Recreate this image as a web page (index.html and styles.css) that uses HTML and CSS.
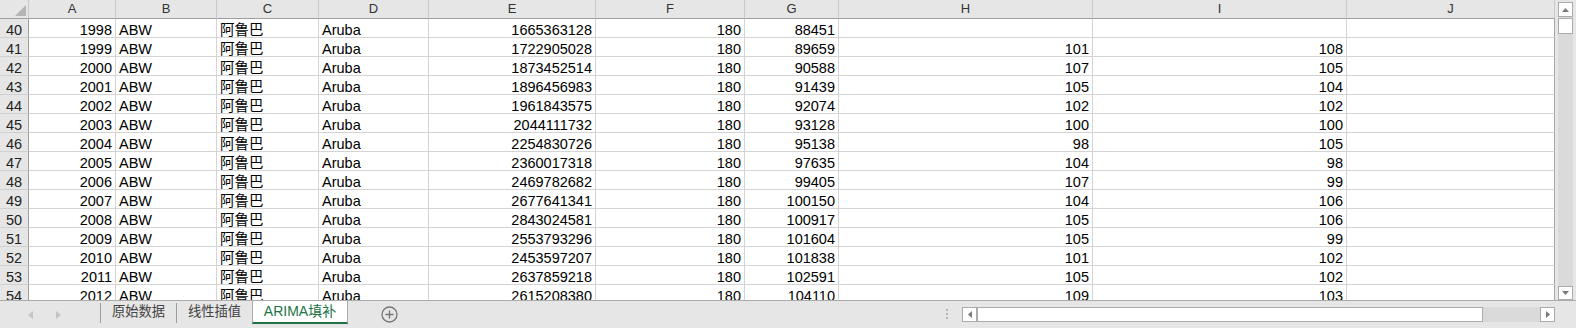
FILE: index.html
```html
<!DOCTYPE html>
<html lang="zh-CN">
<head>
    <meta charset="UTF-8">
    <title>ARIMA填补</title>
    <link rel="stylesheet" href="styles.css">
</head>
<body>
    <div class="window">
        <div class="main">
            <div class="sheet">
                <div class="grid" id="grid"></div>
            </div>
            <div class="vscroll">
                <div class="vbtn up"><svg width="7" height="4"><polygon points="0,4 7,4 3.5,0"/></svg></div>
                <div class="vtrack"><div class="vthumb"></div></div>
                <div class="vbtn down"><svg width="7" height="4"><polygon points="0,0 7,0 3.5,4"/></svg></div>
            </div>
        </div>

        <div class="tabbar">
            <div class="tabs">
                <div class="nav">
                    <svg width="5" height="8"><polygon points="5,0 5,8 0,4"/></svg>
                    <svg width="5" height="8"><polygon points="0,0 0,8 5,4"/></svg>
                </div>
                <span class="sep"></span>
                <div class="tab">原始数据</div>
                <span class="sep"></span>
                <div class="tab">线性插值</div>
                <div class="tab active">ARIMA填补</div>
                <div class="add">
                    <svg width="17" height="17" viewBox="0 0 17 17">
                        <circle cx="8.5" cy="8.5" r="7.5"/>
                        <path d="M8.5 4.5v8M4.5 8.5h8"/>
                    </svg>
                </div>
            </div>
            <div class="hbar">
                <div class="grip"><i></i><i></i><i></i></div>
                <div class="hscroll">
                    <span class="sbtn"><svg width="4" height="7"><polygon points="4,0 4,7 0,3.5"/></svg></span>
                    <span class="hthumb"></span>
                    <span class="htrack"></span>
                    <span class="sbtn"><svg width="4" height="7"><polygon points="0,0 0,7 4,3.5"/></svg></span>
                </div>
            </div>
        </div>
    </div>

    <script>
        const letters = ["A", "B", "C", "D", "E", "F", "G", "H", "I", "J"];

        // row, year, E, G, H, I
        const rows = [
            [40, 1998, 1665363128, 88451, "", ""],
            [41, 1999, 1722905028, 89659, 101, 108],
            [42, 2000, 1873452514, 90588, 107, 105],
            [43, 2001, 1896456983, 91439, 105, 104],
            [44, 2002, 1961843575, 92074, 102, 102],
            [45, 2003, 2044111732, 93128, 100, 100],
            [46, 2004, 2254830726, 95138, 98, 105],
            [47, 2005, 2360017318, 97635, 104, 98],
            [48, 2006, 2469782682, 99405, 107, 99],
            [49, 2007, 2677641341, 100150, 104, 106],
            [50, 2008, 2843024581, 100917, 105, 106],
            [51, 2009, 2553793296, 101604, 105, 99],
            [52, 2010, 2453597207, 101838, 101, 102],
            [53, 2011, 2637859218, 102591, 105, 102],
            [54, 2012, 2615208380, 104110, 109, 103]
        ];

        function buildGrid() {
            let grid = document.getElementById("grid");
            let html = `<div class="cell corner"><svg width="11" height="11"><polygon points="11,0 11,11 0,11"/></svg></div>`;
            letters.forEach(l => {
                html += `<div class="cell colhead">${l}</div>`;
            });
            rows.forEach(r => {
                html += `
                    <div class="cell rowhead">${r[0]}</div>
                    <div class="cell num">${r[1]}</div>
                    <div class="cell">ABW</div>
                    <div class="cell">阿鲁巴</div>
                    <div class="cell">Aruba</div>
                    <div class="cell num">${r[2]}</div>
                    <div class="cell num">180</div>
                    <div class="cell num">${r[3]}</div>
                    <div class="cell num">${r[4]}</div>
                    <div class="cell num">${r[5]}</div>
                    <div class="cell last"></div>`;
            });
            grid.innerHTML = html;
        }

        buildGrid();
    </script>
</body>
</html>
```

FILE: styles.css
```css
body {
    margin: 0;
    background: #e6e6e6;
    font-family: "Liberation Sans", "Noto Sans CJK SC", sans-serif;
}
.window {
    width: 1576px;
    height: 328px;
    display: flex;
    flex-direction: column;
    overflow: hidden;
}
.main {
    display: flex;
    height: 300px;
}
.sheet {
    width: 1555px;
    height: 300px;
    overflow: hidden;
    background: #fff;
}
.grid {
    display: grid;
    grid-template-columns: 29px 87px 101px 102px 110px 167px 149px 94px 254px 254px 208px;
    grid-auto-rows: 19px;
}
.cell {
    box-sizing: border-box;
    border-right: 1px solid #d4d4d4;
    border-bottom: 1px solid #d4d4d4;
    padding: 0 3px;
    font-size: 14.5px;
    line-height: 23px;
    white-space: nowrap;
    overflow: hidden;
    color: #000;
}
.num {
    text-align: right;
}
.last {
    border-right-color: #a6a6a6;
}
.corner {
    display: flex;
    justify-content: flex-end;
    align-items: flex-end;
    padding: 0 2px 2px 0;
    background: #e6e6e6;
    border-right-color: #c9c9c9;
    border-bottom-color: #9e9e9e;
}
.corner svg {
    fill: #b5b5b5;
}
.colhead {
    background: #e6e6e6;
    border-right-color: #c9c9c9;
    border-bottom-color: #9e9e9e;
    font-size: 13px;
    line-height: 18px;
    text-align: center;
    color: #333;
}
.rowhead {
    background: #e6e6e6;
    border-right-color: #9e9e9e;
    border-bottom-color: #d0d0d0;
    text-align: center;
    padding: 0;
    color: #222;
}

/* vertical scrollbar */
.vscroll {
    width: 21px;
    box-sizing: border-box;
    padding: 2px 3px 0;
    display: flex;
    flex-direction: column;
}
.vbtn {
    box-sizing: border-box;
    height: 15px;
    background: #fff;
    border: 1px solid #ababab;
    display: flex;
    align-items: center;
    justify-content: center;
}
.vbtn.down {
    height: 14px;
}
.vbtn svg, .sbtn svg {
    fill: #7a7a7a;
}
.vtrack {
    flex: 1;
    background: #dadada;
    padding-top: 1px;
}
.vthumb {
    box-sizing: border-box;
    height: 16px;
    background: #fff;
    border: 1px solid #ababab;
}

/* sheet tabs */
.tabbar {
    display: flex;
    height: 27px;
    border-top: 1px solid #ababab;
}
.tabs {
    flex: 1;
    display: flex;
    align-items: flex-start;
}
.nav {
    box-sizing: border-box;
    width: 100px;
    height: 27px;
    padding-left: 28px;
    display: flex;
    align-items: center;
    gap: 23px;
}
.nav svg {
    fill: #c4c4c4;
}
.sep {
    width: 1px;
    height: 20px;
    margin-top: 2px;
    background: #9c9c9c;
}
.tab {
    width: 75px;
    height: 21px;
    line-height: 21px;
    text-align: center;
    font-size: 13.3px;
    color: #444;
}
.tab.active {
    width: 94px;
    background: #fff;
    border-left: 1px solid #ababab;
    border-right: 1px solid #ababab;
    border-bottom: 2px solid #217346;
    color: #217346;
    font-size: 14px;
}
.add {
    margin: 5px 0 0 33px;
    height: 17px;
}
.add svg {
    fill: none;
    stroke: #767676;
    stroke-width: 1.3;
}

/* horizontal scrollbar */
.hbar {
    display: flex;
    margin-right: 21px;
}
.grip {
    display: flex;
    flex-direction: column;
    gap: 2px;
    margin: 8px 14px 0 0;
}
.grip i {
    width: 2px;
    height: 2px;
    background: #b4b4b4;
}
.hscroll {
    display: flex;
    width: 593px;
    height: 15px;
    margin-top: 6px;
}
.sbtn {
    box-sizing: border-box;
    width: 15px;
    height: 15px;
    background: #fff;
    border: 1px solid #ababab;
    display: flex;
    align-items: center;
    justify-content: center;
}
.hthumb {
    box-sizing: border-box;
    width: 506px;
    background: #fff;
    border: 1px solid #ababab;
}
.htrack {
    flex: 1;
    background: #dadada;
}
```
